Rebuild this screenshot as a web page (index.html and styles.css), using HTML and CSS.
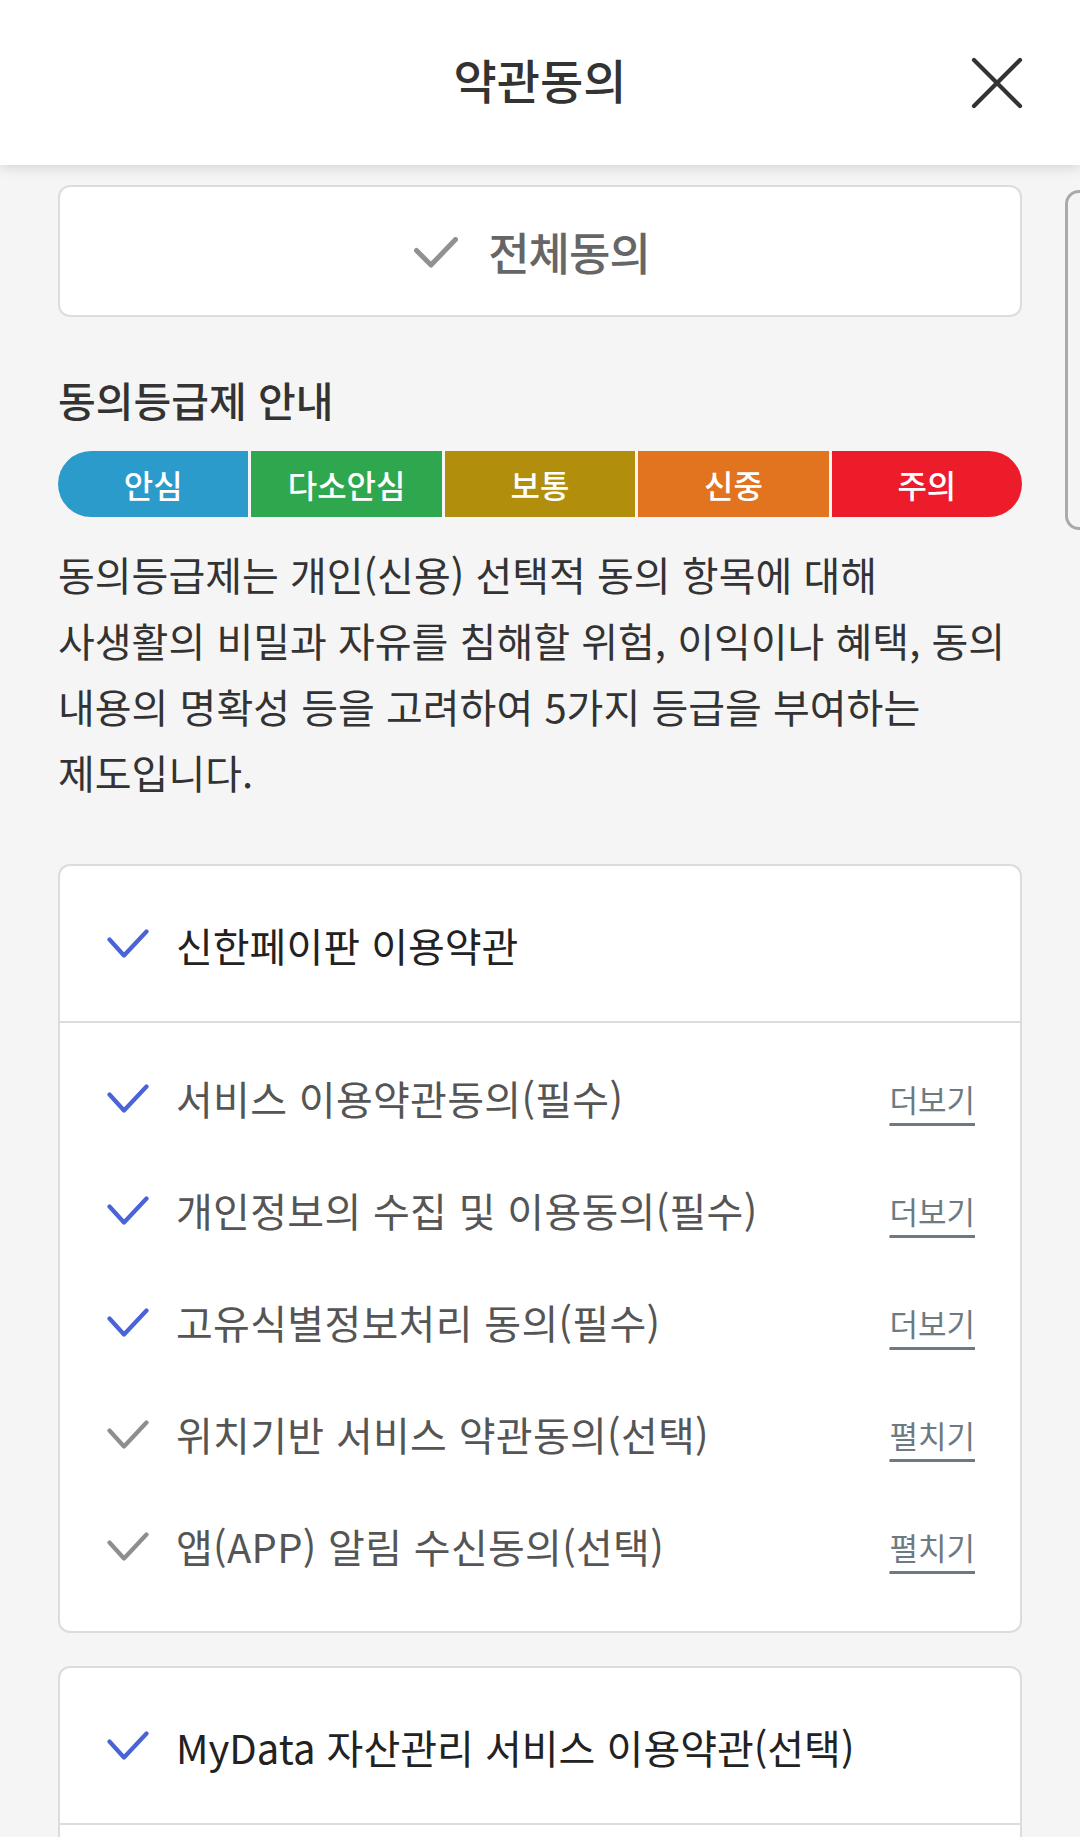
FILE: index.html
```html
<!DOCTYPE html>
<html lang="ko">
<head>
<meta charset="utf-8">
<title>약관동의</title>
<link rel="stylesheet" href="styles.css">
</head>
<body>
<header class="topbar">
  <span class="spacer"></span>
  <h1 class="title">약관동의</h1>
  <button class="close" aria-label="닫기">
    <svg width="52" height="52" viewBox="0 0 52 52"><path d="M3 3 L49 49 M49 3 L3 49" stroke="#333" stroke-width="4.2" stroke-linecap="round" fill="none"/></svg>
  </button>
</header>

<div class="side-tab"></div>

<main class="content">
  <div class="all-agree">
    <svg class="chk-big" width="44" height="31" viewBox="0 0 44 31"><polyline points="2.5,13.5 17,28 41.5,2.5" fill="none" stroke="#919191" stroke-width="5" stroke-linecap="round" stroke-linejoin="round"/></svg>
    <span class="all-agree-text">전체동의</span>
  </div>

  <h2 class="grade-title">동의등급제 안내</h2>
  <div class="grade-bar">
    <span class="grade g1">안심</span>
    <span class="grade g2">다소안심</span>
    <span class="grade g3">보통</span>
    <span class="grade g4">신중</span>
    <span class="grade g5">주의</span>
  </div>
  <p class="desc">동의등급제는 개인(신용) 선택적 동의 항목에 대해<br>사생활의 비밀과 자유를 침해할 위험, 이익이나 혜택, 동의<br>내용의 명확성 등을 고려하여 5가지 등급을 부여하는<br>제도입니다.</p>

  <section class="terms-card">
    <div class="terms-head">
      <svg class="chk" width="42" height="29" viewBox="0 0 42 29"><polyline points="2.5,10.5 17,26.5 39.5,2.5" fill="none" stroke="#4a63d6" stroke-width="4.2" stroke-linecap="round" stroke-linejoin="round"/></svg>
      <span class="head-text">신한페이판 이용약관</span>
    </div>
    <ul class="terms-list">
      <li class="term">
        <svg class="chk" width="42" height="29" viewBox="0 0 42 29"><polyline points="2.5,10.5 17,26.5 39.5,2.5" fill="none" stroke="#4a63d6" stroke-width="4.2" stroke-linecap="round" stroke-linejoin="round"/></svg>
        <span class="term-text">서비스 이용약관동의(필수)</span>
        <a class="more">더보기</a>
      </li>
      <li class="term">
        <svg class="chk" width="42" height="29" viewBox="0 0 42 29"><polyline points="2.5,10.5 17,26.5 39.5,2.5" fill="none" stroke="#4a63d6" stroke-width="4.2" stroke-linecap="round" stroke-linejoin="round"/></svg>
        <span class="term-text">개인정보의 수집 및 이용동의(필수)</span>
        <a class="more">더보기</a>
      </li>
      <li class="term">
        <svg class="chk" width="42" height="29" viewBox="0 0 42 29"><polyline points="2.5,10.5 17,26.5 39.5,2.5" fill="none" stroke="#4a63d6" stroke-width="4.2" stroke-linecap="round" stroke-linejoin="round"/></svg>
        <span class="term-text">고유식별정보처리 동의(필수)</span>
        <a class="more">더보기</a>
      </li>
      <li class="term">
        <svg class="chk" width="42" height="29" viewBox="0 0 42 29"><polyline points="2.5,10.5 17,26.5 39.5,2.5" fill="none" stroke="#8e8e8e" stroke-width="4.2" stroke-linecap="round" stroke-linejoin="round"/></svg>
        <span class="term-text">위치기반 서비스 약관동의(선택)</span>
        <a class="more">펼치기</a>
      </li>
      <li class="term">
        <svg class="chk" width="42" height="29" viewBox="0 0 42 29"><polyline points="2.5,10.5 17,26.5 39.5,2.5" fill="none" stroke="#8e8e8e" stroke-width="4.2" stroke-linecap="round" stroke-linejoin="round"/></svg>
        <span class="term-text">앱(APP) 알림 수신동의(선택)</span>
        <a class="more">펼치기</a>
      </li>
    </ul>
  </section>

  <section class="terms-card">
    <div class="terms-head">
      <svg class="chk" width="42" height="29" viewBox="0 0 42 29"><polyline points="2.5,10.5 17,26.5 39.5,2.5" fill="none" stroke="#4a63d6" stroke-width="4.2" stroke-linecap="round" stroke-linejoin="round"/></svg>
      <span class="head-text">MyData 자산관리 서비스 이용약관(선택)</span>
    </div>
    <div class="terms-body-empty"></div>
  </section>
</main>
</body>
</html>
```

FILE: styles.css
```css
* { box-sizing: border-box; }

html, body {
  margin: 0;
  padding: 0;
}

body {
  width: 1080px;
  min-height: 1837px;
  background: #f5f5f5;
  font-family: "Noto Sans CJK KR", "Noto Sans", sans-serif;
  color: #333;
  overflow: hidden;
  position: relative;
}

.topbar {
  height: 165px;
  background: #fff;
  display: grid;
  grid-template-columns: 1fr auto 1fr;
  align-items: center;
  box-shadow: 0 3px 12px rgba(0, 0, 0, 0.13);
  position: relative;
  z-index: 2;
}

.title {
  margin: 0;
  font-size: 47px;
  font-weight: 500;
  color: #333;
  letter-spacing: 0;
  line-height: 1;
  padding-bottom: 8px;
}

.close {
  justify-self: end;
  margin-right: 57px;
  background: none;
  border: 0;
  padding: 0;
  width: 52px;
  height: 52px;
  display: flex;
}

.side-tab {
  position: absolute;
  left: 1065px;
  top: 190px;
  width: 40px;
  height: 340px;
  border: 3px solid #aaa;
  border-radius: 14px;
}

.content {
  padding: 20px 58px 40px 58px;
}

.all-agree {
  height: 132px;
  background: #fff;
  border: 2px solid #dcdcdc;
  border-radius: 12px;
  display: flex;
  align-items: center;
  justify-content: center;
  gap: 30px;
  padding-right: 16px;
}

.chk-big { flex: none; margin-top: 2px; }

.all-agree-text {
  font-size: 45px;
  font-weight: 500;
  color: #666;
  letter-spacing: -1px;
  line-height: 1;
}

.grade-title {
  margin: 57px 0 0 0;
  font-size: 41px;
  font-weight: 500;
  color: #333;
  line-height: 50px;
  letter-spacing: 0;
}

.grade-bar {
  margin-top: 27px;
  height: 66px;
  display: flex;
  gap: 3px;
  border-radius: 33px;
  overflow: hidden;
}

.grade {
  flex: 1;
  display: flex;
  align-items: center;
  justify-content: center;
  color: #fff;
  font-size: 32px;
  font-weight: 500;
  letter-spacing: 0;
}

.g1 { background: #2b9bcb; }
.g2 { background: #2ea74f; }
.g3 { background: #b18e0c; }
.g4 { background: #e2731f; }
.g5 { background: #ec1c2b; }

.desc {
  margin: 24px 0 0 0;
  font-size: 40px;
  line-height: 66px;
  color: #333;
  letter-spacing: 0;
  white-space: nowrap;
}

.terms-card {
  margin-top: 59px;
  background: #fff;
  border: 2px solid #dcdcdc;
  border-radius: 12px;
}

.terms-card + .terms-card { margin-top: 33px; }

.terms-head {
  height: 157px;
  display: flex;
  align-items: center;
  padding-left: 47px;
  gap: 27px;
  border-bottom: 2px solid #dcdcdc;
}

.chk { flex: none; }

.head-text {
  font-size: 40px;
  color: #222;
  letter-spacing: 0;
  line-height: 1;
  padding-top: 2px;
}

.terms-list {
  list-style: none;
  margin: 0;
  padding: 19px 0 29px 0;
}

.terms-body-empty {
  height: 120px;
}

.term {
  height: 112px;
  display: flex;
  align-items: center;
  padding: 0 45px 0 47px;
  gap: 27px;
}

.term-text {
  flex: 1;
  font-size: 40px;
  color: #555;
  letter-spacing: 0.3px;
  line-height: 1;
}

.more {
  font-size: 31px;
  color: #6e7a82;
  line-height: 1;
  text-decoration: underline;
  text-decoration-thickness: 3px;
  text-underline-offset: 11px;
  letter-spacing: 0;
}
```
